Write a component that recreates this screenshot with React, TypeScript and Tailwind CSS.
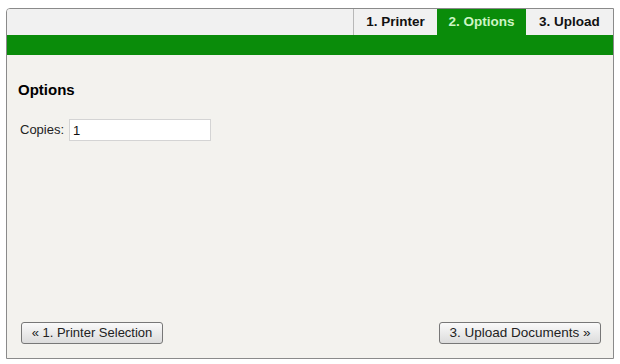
export default function App() {
  return (
    <div className="min-h-[364px] w-[620px] bg-white pl-[6px] pt-[8px] font-['Liberation_Sans',Arial,sans-serif] text-[#222]">
      <div className="flex h-[351px] w-[608px] flex-col overflow-hidden rounded-tl-[4px] border border-[#8a8a8a] bg-[#f3f2ee]">
        {/* tab header */}
        <div className="flex h-[26px] shrink-0 justify-end bg-[#f1f1f1] text-[13.5px] font-bold">
          <div className="flex w-[84px] items-center justify-center border-l border-[#b8b8b8] bg-[#f1f1f1] text-[#111]">
            1. Printer
          </div>
          <div className="flex w-[89px] items-center justify-center bg-[#0a8c0a] text-[#cdf5c4]">
            2. Options
          </div>
          <div className="flex w-[87px] items-center justify-center bg-[#f1f1f1] text-[#111]">
            3. Upload
          </div>
        </div>
        <div className="h-[20px] shrink-0 bg-[#0a8c0a]" />

        {/* body */}
        <div className="flex flex-1 flex-col px-[11px] pt-[26px]">
          <h2 className="text-[15px] font-bold leading-[18px] text-black">Options</h2>
          <div className="mt-[20px] flex items-center gap-[5px] pl-[2px] text-[13px]">
            <label className="text-[#222]">Copies:</label>
            <input
              defaultValue="1"
              className="h-[22px] w-[142px] border border-[#d4d4d4] bg-white px-[3px] text-[13px] text-[#111] outline-none"
            />
          </div>

          <div className="mt-auto flex justify-between pb-[14px] pl-[3px] pr-[1px]">
            <button className="h-[22px] w-[142px] rounded-[3px] border border-[#777] bg-gradient-to-b from-[#fafafa] to-[#dcdcdc] text-[13px] text-[#222]">
              « 1. Printer Selection
            </button>
            <button className="h-[22px] w-[162px] rounded-[3px] border border-[#777] bg-gradient-to-b from-[#fafafa] to-[#dcdcdc] text-[13.5px] text-[#222]">
              3. Upload Documents »
            </button>
          </div>
        </div>
      </div>
    </div>
  );
}
